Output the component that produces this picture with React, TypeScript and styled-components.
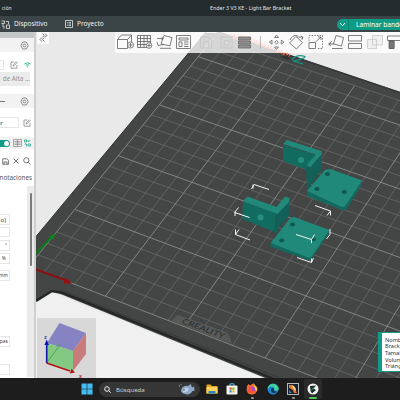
import React from 'react';
import styled, { createGlobalStyle } from 'styled-components';

const GlobalStyle = createGlobalStyle`
  * { box-sizing: border-box; }
  body { margin: 0; overflow: hidden; font-family: 'Noto Sans', 'Open Sans', sans-serif; }
  svg { display: block; flex: none; }
`;

const Window = styled.div`
  width: 400px;
  height: 400px;
  display: flex;
  flex-direction: column;
  overflow: hidden;
  background: #e9e9e9;
`;

const TitleBar = styled.header`
  height: 16px;
  flex: none;
  display: grid;
  grid-template-columns: 210px 1fr;
  align-items: center;
  background: #242c2e;
  color: #e3e6e6;
  font-size: 5px;
  line-height: 16px;
  white-space: nowrap;
`;

const MenuLabel = styled.span`
  width: 11.5px;
  display: flex;
  justify-content: flex-end;
`;

const Title = styled.span`
  font-size: 5.3px;
`;

const NavBar = styled.nav`
  height: 16px;
  flex: none;
  display: flex;
  align-items: center;
  background: #3b4446;
  color: #eef0f0;
  font-size: 6.5px;
  line-height: 16px;
  white-space: nowrap;
`;

const NavItem = styled.div<{ $w: number }>`
  width: ${p => p.$w}px;
  display: flex;
  align-items: center;
  gap: 4px;
  padding-left: 1px;
`;

const SliceButton = styled.div`
  margin-left: auto;
  width: 63px;
  height: 11px;
  display: flex;
  align-items: center;
  border-radius: 6px 0 0 6px;
  background: #0f9b86;
  color: #fff;
  font-size: 6.6px;
  line-height: 11px;
  overflow: hidden;
`;

const SliceToggle = styled.div`
  width: 12px;
  height: 11px;
  flex: none;
  display: flex;
  align-items: center;
  justify-content: center;
  border-right: 1px solid #0a8472;
  margin-right: 7px;
`;

const Main = styled.main`
  height: 346px;
  flex: none;
  display: flex;
`;

const Sidebar = styled.aside`
  width: 36px;
  flex: none;
  background: #fff;
  border-right: 2px solid #cfcfcf;
  overflow: hidden;
`;

const Strip = styled.div`
  height: 6px;
  background: #c5c8c8;
`;

const PanelRow = styled.div<{ $h: number; $shade?: boolean; $top?: number; $gap?: number; $end?: number }>`
  height: ${p => p.$h}px;
  margin-top: ${p => p.$top ?? 0}px;
  display: flex;
  align-items: center;
  justify-content: flex-end;
  gap: ${p => p.$gap ?? 4}px;
  padding-right: ${p => p.$end ?? 3}px;
  background: ${p => (p.$shade ? '#f2f2f2' : 'transparent')};
`;

const Field = styled.div<{ $w: number; $h: number; $fill?: boolean; $top?: number; $size?: number; $end?: number }>`
  width: ${p => p.$w}px;
  height: ${p => p.$h}px;
  margin-top: ${p => p.$top ?? 0}px;
  flex: none;
  display: flex;
  align-items: center;
  justify-content: flex-end;
  padding-right: ${p => p.$end ?? 1}px;
  border: ${p => (p.$fill ? '0' : '1px solid #e6e6e6')};
  border-left: 0;
  background: ${p => (p.$fill ? '#ebebeb' : '#fff')};
  color: ${p => (p.$fill ? '#929292' : '#444')};
  font-size: ${p => p.$size ?? 6}px;
  line-height: 1;
  white-space: nowrap;
`;

const Dash = styled.div`
  width: 5px;
  height: 1px;
  margin-right: auto;
  background: #777;
`;

const Toggle = styled.div`
  width: 10px;
  height: 7px;
  display: flex;
  justify-content: flex-end;
  padding: 1px;
  border-radius: 0 4px 4px 0;
  background: #0f9b86;
  margin-right: 1px;
`;

const Knob = styled.div`
  width: 5px;
  height: 5px;
  border-radius: 50%;
  background: #fff;
`;

const Tabs = styled.div`
  height: 19px;
  display: flex;
  justify-content: flex-end;
  align-items: center;
  padding: 4px 2px 0 0;
  color: #555;
  font-size: 6.3px;
  line-height: 1;
`;

const Settings = styled.div`
  height: 191px;
  display: grid;
  grid-template-columns: 27px 7px;
`;

const SettingsBody = styled.div`
  border-top: 1px solid #fff;
`;

const ScrollTrack = styled.div`
  background: #ebebeb;
  padding: 7px 2px 0 3px;
`;

const ScrollThumb = styled.div`
  height: 73px;
  border-radius: 1px;
  background: #7b7b7b;
`;

const Viewport = styled.section`
  position: relative;
  width: 364px;
  height: 346px;
  overflow: hidden;
`;

const Collapse = styled.div`
  position: absolute;
  left: 1px;
  top: 0;
  width: 12px;
  height: 12px;
  background: #fafafa;
`;

const ToolStrip = styled.div`
  position: absolute;
  left: 79px;
  top: 0;
  width: 285px;
  height: 21px;
  background: rgba(255, 255, 255, 0.78);
  overflow: hidden;
`;

const InfoCard = styled.div`
  position: absolute;
  left: 342px;
  top: 300px;
  width: 40px;
  height: 40px;
  padding: 3.5px 0 0 3px;
  border: 1px solid #0f9b86;
  border-left-width: 4px;
  background: #fff;
  color: #333;
  font-size: 5.6px;
  line-height: 6.7px;
  white-space: nowrap;
`;

const Taskbar = styled.footer`
  height: 22px;
  flex: none;
  display: flex;
  align-items: center;
  background: #1d1d1d;
  padding-left: 81px;
`;

const SearchBox = styled.div`
  width: 101px;
  height: 15px;
  margin: 0 2.5px 0 6px;
  padding: 0 5px 0 5px;
  display: flex;
  align-items: center;
  gap: 5px;
  border-radius: 8px;
  background: #363636;
  color: #cfcfcf;
  font-size: 6.1px;

  svg:last-child { margin-left: auto; }
`;

const AppSlot = styled.div<{ $active?: boolean; $dot?: string; $dotWidth?: number }>`
  width: 18px;
  height: 20px;
  margin-right: 2.4px;
  display: flex;
  flex-direction: column;
  align-items: center;
  padding-top: 4px;
  gap: 2px;
  border-radius: 2px;
  background: ${p => (p.$active ? '#2b2b2b' : 'transparent')};
  &::after {
    content: '';
    width: ${p => p.$dotWidth ?? 3}px;
    height: 1.5px;
    border-radius: 1px;
    background: ${p => p.$dot ?? 'transparent'};
  }
`;

/* Bed grid coordinates (cells) to viewport pixels, seen in perspective. */
const project = (u: number, v: number) => {
  const w = 1 - 0.0027 * u + 0.00596 * v;
  return [(28.7 + 15.04 * u + 9.662 * v) / w, (266.5 + 5.133 * u - 10.152 * v) / w];
};

const line = (a: number[], b: number[]) => `M${a[0].toFixed(2)} ${a[1].toFixed(2)}L${b[0].toFixed(2)} ${b[1].toFixed(2)}`;

const gridPaths = () => {
  let minor = '';
  let major = '';
  for (let i = 0; i <= 28; i++) {
    const d = line(project(i, 0), project(i, 22));
    if (i % 5 === 0) major += d;
    else minor += d;
  }
  for (let i = 0; i <= 22; i++) {
    const d = line(project(0, i), project(28, i));
    if (i % 5 === 0) major += d;
    else minor += d;
  }
  return { minor, major };
};

const Scene = () => {
  const { minor, major } = gridPaths();
  return (
    <svg width="364" height="346" viewBox="36 32 364 346">
      <rect x="36" y="32" width="364" height="346" fill="#e9e9e9" />
      <path d="M36 302 50 292.5 60 296 280 384 H36Z" fill="#f0f0f0" />
      <path d="M36 236.5 205 33 H218 L302 59 400 92 V378 H265 L52 290.5 36 301Z" fill="#444645" />
      <path d="M36 236.5 206 32" stroke="#333635" strokeWidth="1" />
      <path d="M215 31 302 59.5 400 92.5" stroke="#343737" strokeWidth="1.6" fill="none" />
      <path d="M36 301 52 291 63 293 274 379" stroke="#242727" strokeWidth="2.4" fill="none" />
      <path d="M60 289.5 280 378" stroke="#383b3a" strokeWidth="1.2" />
      <path d={minor} stroke="#727473" strokeWidth=".6" fill="none" />
      <path d={major} stroke="#929493" strokeWidth=".8" fill="none" />
      <path d="M171 321 178 315 226 332Q231 335 231.5 344Z" fill="#595b5a" opacity=".9" />
      <text transform="translate(181 323) rotate(20.5) skewX(-10)" fontFamily="Lato, sans-serif" fontSize="7.6" textLength="45" lengthAdjust="spacingAndGlyphs" fill="#2a2d2d">CREALITY</text>

      <path d="M36 253.5 51.5 237" stroke="#0b7a16" strokeWidth="2" />
      <path d="M55 233.5 53.5 240 49 236.5Z" fill="#0b8618" />
      <path d="M36 269.5 66 280.5" stroke="#8d0d10" strokeWidth="2" />
      <path d="M72 283.5 63.5 283.5 65.5 277.5Z" fill="#9b1013" />

      <g stroke="#ff7d62" strokeWidth="2.2" fill="none" strokeDasharray="2 1">
        <path d="M230 34.5 248 37 262 44 278 50 290 55" />
        <path d="M233 38 254 42 271 49" />
      </g>
      <path d="M276 52.5Q280 50 283 54T289 57" stroke="#e8573e" strokeWidth="2" fill="none" strokeDasharray="2 .6" />
      <path d="M280 57Q286 53 290 58L289 60Z" fill="#303231" />
      <path d="M292 59.5Q297 54 305 56.5 306 58 294 61L303 64" stroke="#139a87" strokeWidth="1.2" fill="none" />

      {/* rear bracket */}
      <path d="M283 145 316 155 307 170 283 161Z" fill="#126b5f" />
      <path d="M306 166 322 153V169L307 189.5Z" fill="#126057" />
      <path d="M283 144 287 140 321.5 151 322 154 310 167.5 306.5 165 316 154.5Z" fill="#20897a" />
      <path d="M307 190 325.5 169.5 330 169 362 180.5V184L346 210 342 210 307 196Z" fill="#126a5e" />
      <path d="M307 191 325 170 330 169 362 180.5 345 206.5 342 207Z" fill="#21897a" />
      <circle cx="301" cy="160" r="3" fill="#258f80" />
      <g fill="#10584f">
        <ellipse cx="327.5" cy="174" rx="2.6" ry="2" />
        <ellipse cx="317" cy="189" rx="2.6" ry="2" />
        <ellipse cx="344.3" cy="192" rx="2.6" ry="2" />
      </g>

      {/* front bracket */}
      <path d="M243 201 276 213 277 233 242.5 219Z" fill="#126b5f" />
      <path d="M276 213 289.5 199V215L274 233Z" fill="#126057" />
      <path d="M243 201 247.5 196.5 276.5 207 285 196.5 289.5 198 289 202 277.5 214Z" fill="#20897a" />
      <path d="M271 242 289 221 293 217 329 230V233L311 260 308 260 270 246.5Z" fill="#126a5e" />
      <path d="M271 243 290 218 294 217 329.5 230 311 257.5 308 257.5Z" fill="#21897a" />
      <circle cx="260.5" cy="217.5" r="3" fill="#258f80" />
      <g fill="#10584f">
        <ellipse cx="292.5" cy="224.5" rx="2.6" ry="2" />
        <ellipse cx="281.7" cy="240.5" rx="2.6" ry="2" />
        <ellipse cx="313.8" cy="239.3" rx="2.2" ry="1.9" />
      </g>
      <g stroke="#f2f5f4" strokeWidth="1" fill="none">
        <path d="M251.5 189 254 184.5 269 189.5M253 184.5V188.5" />
        <path d="M238.5 207.5 234.5 212.5 249.5 217.5M235 212V216" />
        <path d="M239 229.5 235.5 234.5 250 240M235.5 234.5V229.5" />
        <path d="M315 205.5 330.5 211 327 215.5M330.5 211V215.5" />
        <path d="M330 229V234.5L326.5 239" />
        <path d="M296 234.5 311.5 239.5 314.5 234.5M311.5 239.5V243" />
        <path d="M297 257.5 311.5 262.5 313.5 258M311.5 262.5V258.5" />
      </g>

      {/* orientation cube */}
      <rect x="37" y="318" width="59" height="60" fill="#d8d8d8" />
      <path d="M59.5 323 86 333 73 351 47 343Z" fill="#8583c1" />
      <path d="M47 343 73 351V371L47 363Z" fill="#83c983" />
      <path d="M73 351 86 333V354L73 371Z" fill="#c97b7b" />
      <path d="M48 361 60 345M60 344 56.5 346.5" stroke="#48a650" strokeWidth="1" />
      <path d="M46.7 363V345" stroke="#1216ae" strokeWidth="1.6" />
      <path d="M46.7 339.5 44.4 345H49Z" fill="#1216ae" />
      <path d="M46.5 363 70 371" stroke="#b50f13" strokeWidth="1.5" />
      <path d="M75 372.5 69.8 373.5 71.5 368.8Z" fill="#b50f13" />
      <text x="44.3" y="338.5" fontSize="5" fontWeight="700" fill="#3b3db0">z</text>
      <text x="79" y="377.5" fontSize="5" fontWeight="700" fill="#c4333a">x</text>
    </svg>
  );
};

const Gear = () => (
  <svg width="9" height="9" viewBox="0 0 9 9" fill="none" stroke="#777" strokeWidth=".8">
    <path d="M2.7 1H6.3L8.2 4.5 6.3 8H2.7L.8 4.5Z" strokeLinejoin="round" />
    <circle cx="4.5" cy="4.5" r="1.4" />
  </svg>
);

const Edit = () => (
  <svg width="8" height="8" viewBox="0 0 8 8" fill="none" stroke="#888" strokeWidth=".8">
    <path d="M4.2 1H1V7.2H7V4M3 5 3.4 3.7 6.4.8 7.2 1.6 4.4 4.5Z" />
  </svg>
);

const Wifi = () => (
  <svg width="7" height="6" viewBox="0 0 7 6" fill="none" stroke="#25ad8c" strokeWidth=".9">
    <path d="M.4 2Q3.5-.5 6.6 2M1.8 3.3Q3.5 2 5.2 3.3" />
    <circle cx="3.5" cy="4.7" r=".3" />
  </svg>
);

const ToolIcons = () => (
  <svg width="285" height="21" viewBox="115 32 285 21" fill="none" stroke="#606060" strokeWidth=".8">
    <path d="M117.5 39.5 121.5 35H131.5V43M117.5 39.5H127.5V48.5H117.5ZM127.5 39.5 131.5 35" />
    <circle cx="130.5" cy="45" r="3" fill="#fff" />
    <path d="M128.5 45H132.5M130.5 43V47" />
    <path d="M137.5 35.5H150.5V43M137.5 35.5V47.5H147M137.5 38.5H150.5M137.5 41.5H150.5M137.5 44.5H146M140.5 35.5V47.5M144 35.5V47.5M147.3 35.5V42" />
    <circle cx="149" cy="45.5" r="2.8" fill="#fff" />
    <path d="M147.2 45.5H150.8M149 43.7V47.3" />
    <path d="M164 35.5 172 37.5 170 46 161 43.8ZM157 38.5H163M161.5 36.8 163 38.5 161.5 40M164 44.5 158 45.5 157 41.8M160 48.3H171" />
    <path d="M176.5 35.5H190.5V48.5H176.5ZM179 38H188V40H179ZM179 42H182V46.5H179ZM184 42H188.5M184 44.2H188.5M184 46.5H188.5" />
    <g stroke="#c4c4c4">
      <path d="M200.500 37H208L211.500 40.500V48H200.500ZM203.500 47V41.500H208.500V47" />
      <path d="M221 37H232V48H221ZM224 47V40.500H229V45H224" />
    </g>
    <path d="M238.500 37H250.500V40H238.500ZM238.500 41H250.500V44H238.500ZM238.500 45H250.500V48H238.500Z" fill="#939393" />
    <path d="M260.500 36V49" stroke="#aaa" />
    <path d="M276.500 35 278.500 37.500H274.500ZM276.500 49.500 278.500 47H274.500ZM269.300 42.200 272 40.200V44.200ZM284 42.200 281.300 40.200V44.200Z" />
    <path d="M276.500 40.500 278.300 42.300 276.500 44.100 274.700 42.300Z" />
    <path d="M296 36.500 302.500 42.500 296.500 49 289.500 43ZM290 40Q292 35 297.500 35.500M297 37H302.500V39.500M301 36 303 37.500 301 39.500" />
    <path d="M309 42.500H315.500V48.500H309Z" />
    <path d="M309 41V35.500H322.500V48.500H317" strokeDasharray="1.500 1.200" />
    <path d="M315.500 42 321 37M318 37H321V40" />
    <path d="M336 35.500 343.500 37.500 341.500 46 333.500 44ZM332 41 328.500 44H334M331 43 329 44.500 331 46M332 48.500H342.500" />
    <path d="M348.500 35.500H361.500V41H348.500ZM348.500 43.500H361.500V48.500H348.500Z" />
    <g stroke="#c9c9c9">
      <path d="M367.500 39.500H376.500V48.500H367.500ZM372.500 35.500H382.500V45H372.500Z" fill="#e5e5e5" fillOpacity=".45" />
    </g>
    <path d="M387.500 36H400M387.500 36V40.500H400M389 40.500H394V48.500H389Z" />
    <path d="M389.500 41H394V48.500H389.500Z" fill="#777" />
  </svg>
);

const App = () => (
  <>
    <GlobalStyle />
    <Window>
      <TitleBar>
        <MenuLabel>ción</MenuLabel>
        <Title>Ender 3 V3 KE - Light Bar Bracket</Title>
      </TitleBar>
      <NavBar>
        <NavItem $w={64}>
          <svg width="9" height="9" viewBox="0 0 9 9" fill="none" stroke="#e5e8e8" strokeWidth=".8">
            <path d="M.5 1H3.500V3.500H.5M2 3.500V5M1 6H3V8.500M5 1.500H7.500V4M5.500 5H8.500V8.500H5.500Z" />
          </svg>
          Dispositivo
        </NavItem>
        <NavItem $w={60}>
          <svg width="8" height="8" viewBox="0 0 8 8" fill="none" stroke="#e5e8e8" strokeWidth=".8">
            <path d="M.5.5H7.500V7.500H.5ZM2 2.500H2.700M3.500 2.500H6M2 4H2.700M3.500 4H6M2 5.500H2.700M3.500 5.500H6" />
          </svg>
          Proyecto
        </NavItem>
        <SliceButton>
          <SliceToggle>
            <svg width="7" height="5" viewBox="0 0 7 5" fill="none" stroke="#fff" strokeWidth="1"><path d="M1 1.200 3.500 3.500 6 1.200" /></svg>
          </SliceToggle>
          Laminar bande
        </SliceButton>
      </NavBar>
      <Main>
        <Sidebar>
          <Strip />
          <PanelRow $h={14} $shade $end={5.5}><Gear /></PanelRow>
          <PanelRow $h={11} $top={7} $gap={6} $end={3.5}>
            <Field $w={9} $h={10} />
            <Edit />
            <Wifi />
          </PanelRow>
          <PanelRow $h={14} $top={2} $end={4}><Field $w={30} $h={14} $fill $size={6.3} $end={0}>de Alta ...</Field></PanelRow>
          <PanelRow $h={14} $top={8} $shade $end={5.5}><Dash /><Gear /></PanelRow>
          <PanelRow $h={11} $top={9} $end={3}>
            <Field $w={21} $h={11} $end={15}>ar</Field>
            <Edit />
          </PanelRow>
          <PanelRow $h={12} $top={9} $shade $gap={2} $end={3}>
            <Toggle><Knob /></Toggle>
            <svg width="9" height="8" viewBox="0 0 9 8" fill="none" stroke="#888" strokeWidth=".7"><path d="M.5.5H8.500V7.500H.5ZM4.500.5V7.500M1.500 2.500H7.500M1.500 4H7.500M1.500 5.500H7.500" /></svg>
            <svg width="7" height="8" viewBox="0 0 7 8" fill="none" stroke="#25a58c" strokeWidth=".8"><path d="M.5 1H2.500V3H.5ZM4.500 3 6.500 1M4 1V3M.5 5H2.500V7.500M4 5H6.500V7H4Z" /></svg>
          </PanelRow>
          <PanelRow $h={12} $top={6} $gap={4} $end={3}>
            <svg width="7" height="7" viewBox="0 0 7 7" fill="none" stroke="#555" strokeWidth=".8"><path d="M.7.8H5L6.400 2.200V6.300H.7ZM2 6V4H5V6" /></svg>
            <svg width="6" height="6" viewBox="0 0 6 6" stroke="#555" strokeWidth=".8"><path d="M.7.7 5.300 5.300M5.300.7.7 5.300" /></svg>
            <svg width="8" height="8" viewBox="0 0 8 8" fill="none" stroke="#555" strokeWidth=".8"><circle cx="3.300" cy="3.300" r="2.600" /><path d="M5.200 5.200 7.500 7.500" /></svg>
          </PanelRow>
          <Tabs>notaciones</Tabs>
          <Settings>
            <SettingsBody>
              <Field $w={10} $h={11} $top={27} $size={6} $end={3}>o)</Field>
              <Field $w={10} $h={10} $top={2} />
              <Field $w={10} $h={11} $top={3} $size={5} $end={2}>°</Field>
              <Field $w={10} $h={11} $top={2} $size={5} $end={3}>%</Field>
              <Field $w={10} $h={11} $top={6} $size={4.8}>mm</Field>
              <Field $w={10} $h={11} $top={55} $size={5}>pas</Field>
              <Field $w={10} $h={11} $top={17} />
            </SettingsBody>
            <ScrollTrack><ScrollThumb /></ScrollTrack>
          </Settings>
        </Sidebar>
        <Viewport>
          <Scene />
          <Collapse>
            <svg width="12" height="12" viewBox="0 0 12 12" fill="none" stroke="#555" strokeWidth=".8">
              <path d="M5 5.500 3 7.500 5 9.500M7.500 5.500 5.500 7.500 7.500 9.500M5.500 1.500 7.500 3.500 5.500 5M8 1.500 10 3.500 8 5" />
            </svg>
          </Collapse>
          <ToolStrip><ToolIcons /></ToolStrip>
          <InfoCard>
            <div>Nomb</div>
            <div>Brack</div>
            <div>Tamai</div>
            <div>Volum</div>
            <div>Triáng</div>
          </InfoCard>
        </Viewport>
      </Main>
      <Taskbar>
        <svg width="12" height="12" viewBox="0 0 12 12" fill="#44bdf1"><path d="M.5.5H5.700V5.700H.5ZM6.300.5H11.500V5.700H6.300ZM.5 6.300H5.700V11.500H.5ZM6.300 6.300H11.500V11.500H6.300Z" /></svg>
        <SearchBox>
          <svg width="7" height="7" viewBox="0 0 7 7" fill="none" stroke="#eee" strokeWidth="1"><circle cx="3" cy="3" r="2.300" /><path d="M4.700 4.700 6.700 6.700" /></svg>
          Búsqueda
          <svg width="17" height="13" viewBox="0 0 17 13">
            <path d="M3 7Q5 2 10 3L13 1 13.500 4Q16 5 16 2.500L16.500 8 14.500 8Q12 12.500 7 11 3 10 3 7Z" fill="#8eaac8" />
            <path d="M5 7Q7 4 11 5.500 9 10 5 9Z" fill="#c3d3e5" />
            <circle cx="6" cy="7" r=".7" fill="#334" />
            <circle cx="1.500" cy="3" r=".7" fill="#aaa" />
            <circle cx="3" cy="1.500" r=".5" fill="#aaa" />
          </svg>
        </SearchBox>
        <AppSlot>
          <svg width="12" height="12" viewBox="0 0 12 12"><path d="M.5 1.500H4.500L6 3H11.500V10.500H.5Z" fill="#e3a323" /><path d="M.5 4H11.500V10.500H.5Z" fill="#ffd35b" /><path d="M2.500 8H9.500V10.500H2.500Z" fill="#2785c7" /></svg>
        </AppSlot>
        <AppSlot>
          <svg width="12" height="12" viewBox="0 0 12 12"><path d="M4 3V.8H8V3" stroke="#62bce5" fill="none" /><rect x=".5" y="2.500" width="11" height="9" rx="1" fill="#f3f3f3" /><path d="M3.500 4.500H5.700V6.700H3.500Z" fill="#e2522d" /><path d="M6.300 4.500H8.500V6.700H6.300Z" fill="#7db52c" /><path d="M3.500 7.300H5.700V9.500H3.500Z" fill="#279bd5" /><path d="M6.300 7.300H8.500V9.500H6.300Z" fill="#f2b61f" /></svg>
        </AppSlot>
        <AppSlot $dot="#999">
          <svg width="12" height="12" viewBox="0 0 12 12"><path d="M1 3 2.500 1 4 2.500 7.500.3 9 2.500Q12 4 11 8 9 12 5.500 11.500.5 11 .7 6Z" fill="#fb6b29" /><path d="M7.500.3 9.500 3Q12 5 11 8L9 6Z" fill="#ffd044" /><circle cx="6" cy="6.500" r="3" fill="#9b4cdd" /><path d="M1.500 4Q3 5 5 4.500L6.500 6Q5 8 9 8 5 12 2 8Z" fill="#ff503d" /></svg>
        </AppSlot>
        <AppSlot>
          <svg width="12" height="12" viewBox="0 0 12 12"><circle cx="6" cy="6" r="5.500" fill="#1d85cf" /><path d="M1 4Q4-.8 9 1.500 13 4 11 7.500L7 7.500Q8 3.500 4.500 3.500 2 3.500.7 6Z" fill="#42cfa0" /><path d="M4 6Q5 4.500 7 5.500L7 7.500Q8 9 10.500 8.500 8 11 5 9.500 3.500 8 4 6Z" fill="#11365f" /></svg>
        </AppSlot>
        <AppSlot $dot="#999">
          <svg width="12" height="12" viewBox="0 0 12 12"><rect x=".5" y=".5" width="11" height="11" fill="#17202d" stroke="#b9b9b9" /><path d="M2 2H6L10 10H7Q6 6 2 5Z" fill="#e87a32" /><path d="M5 2.500Q9 3 9 8L6 5Z" fill="#f7dfac" /><path d="M2 7 5 10H2Z" fill="#3487b5" /></svg>
        </AppSlot>
        <AppSlot $active $dot="#54c653" $dotWidth={8}>
          <svg width="12" height="12" viewBox="0 0 12 12"><circle cx="6" cy="6" r="5.500" fill="#f4f4f4" /><path d="M3 3 9 2.500 6.500 5.500 9 7 5 10.500 3.500 8Z" fill="#202927" /><path d="M4 7.500 8 3.500" stroke="#35b48d" /></svg>
        </AppSlot>
      </Taskbar>
    </Window>
  </>
);

export default App;
